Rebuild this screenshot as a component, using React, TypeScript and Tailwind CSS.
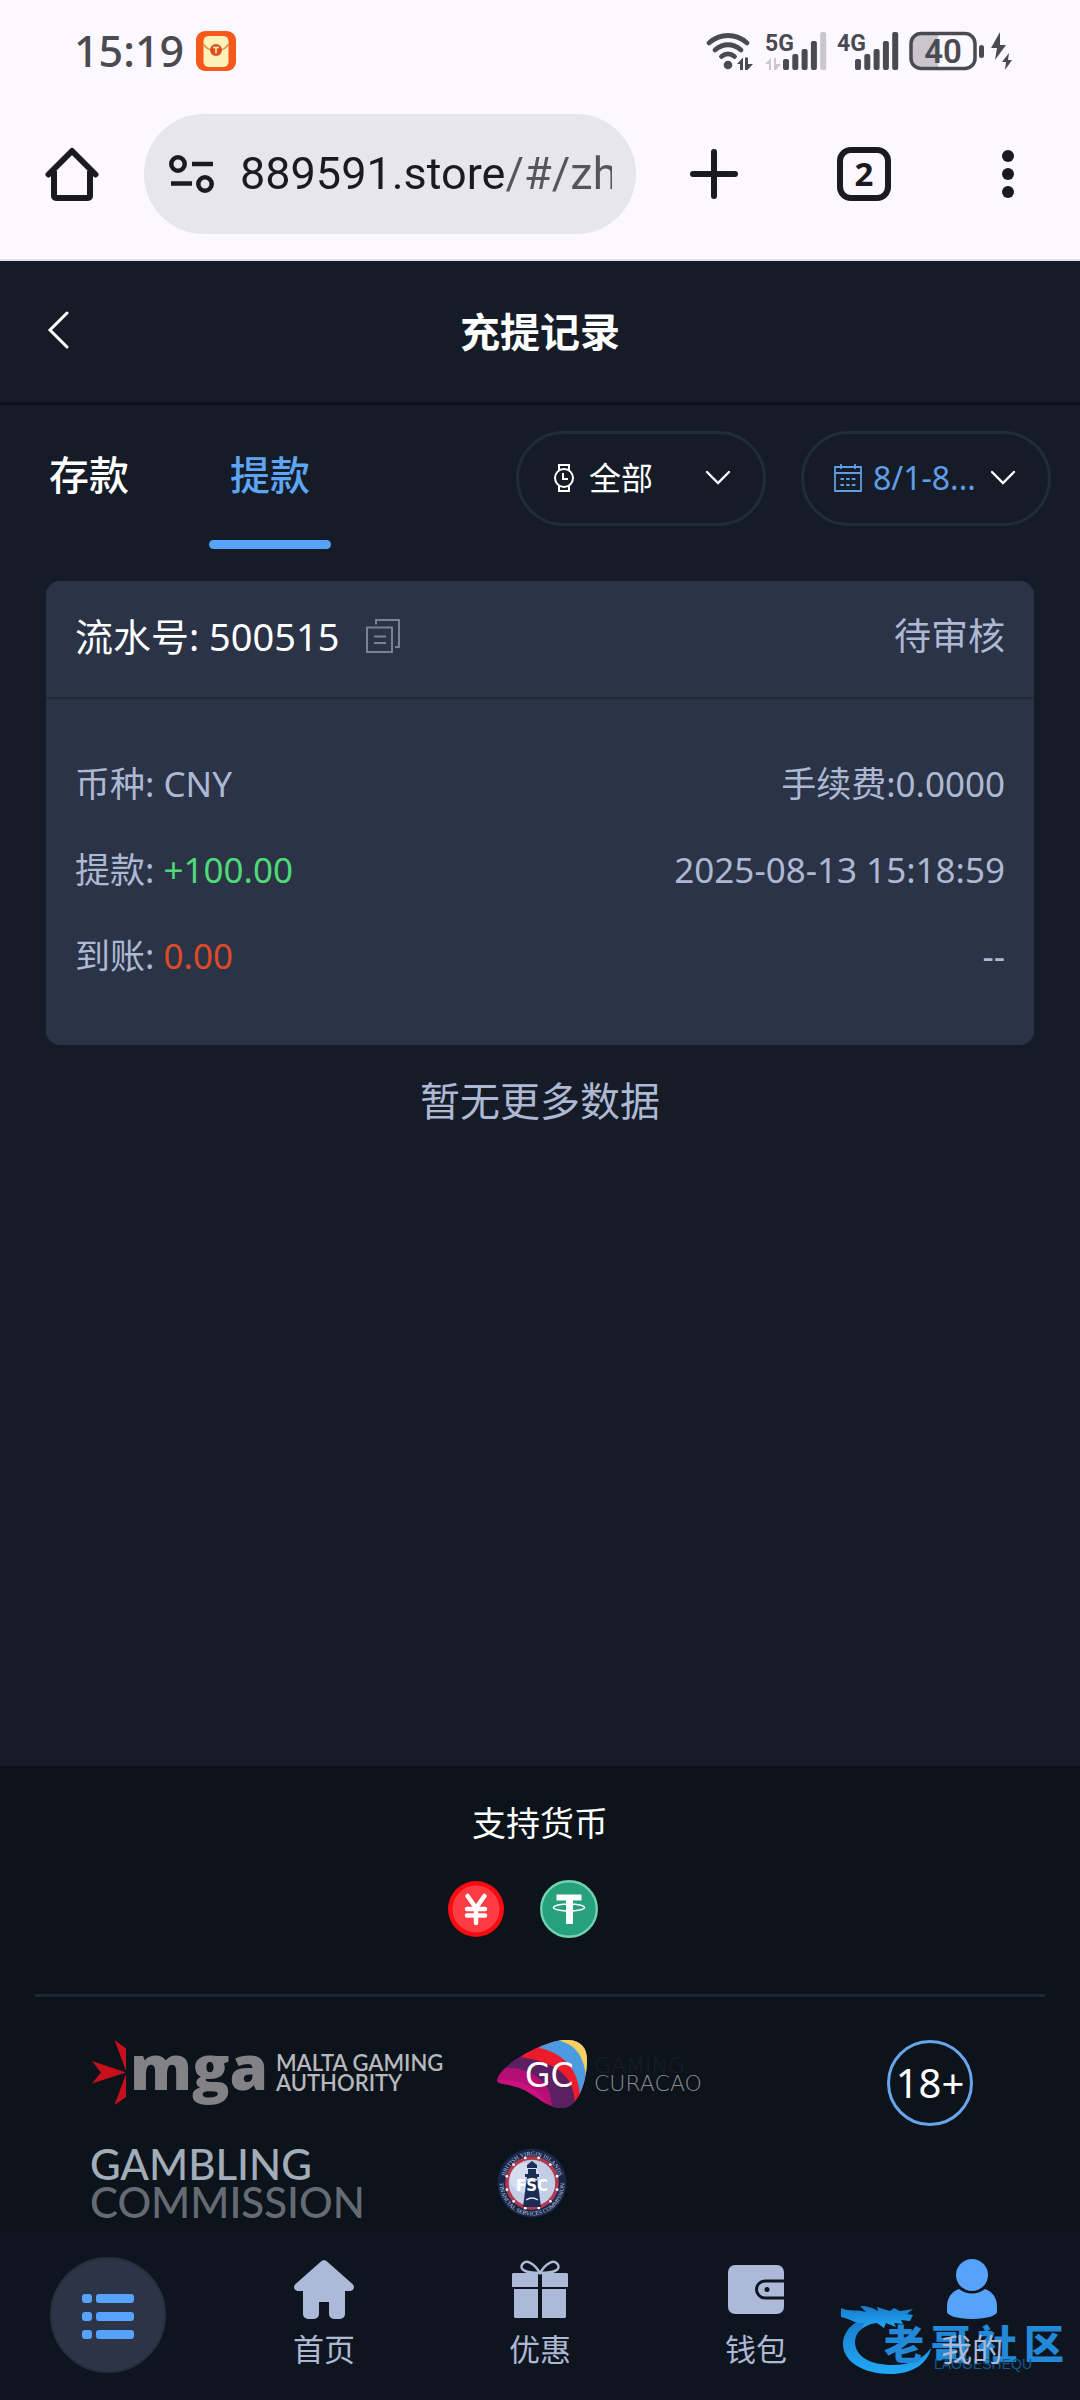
import { useState } from "react";
import type { ReactNode } from "react";

const INK = "#4b4a50";

function RedPacketIcon() {
  return (
    <svg width="42" height="42" viewBox="0 0 42 42" aria-hidden="true">
      <rect x="1" y="1" width="40" height="40" rx="9" fill="#f4581a" />
      <rect x="8.500" y="6" width="25" height="31" rx="5" fill="#fdf0b8" />
      <path d="M8.500 14c2 4.500 6.500 6.500 12.500 6.500S31.500 18.500 33.500 14" fill="none" stroke="#d98a4c" strokeWidth="1.600" />
      <circle cx="21" cy="20" r="6" fill="#dd4d1c" />
      <path d="M18 17.500h6M21 17.500v6" stroke="#fdf0b8" strokeWidth="1.500" fill="none" />
    </svg>
  );
}

function WifiIcon() {
  return (
    <svg width="50" height="40" viewBox="0 0 50 40" aria-hidden="true">
      <g fill="none" stroke={INK} strokeWidth="4.800" strokeLinecap="round">
        <path d="M4 12C15 2 31 2 42 12" />
        <path d="M10 19c8-7 18-7 26 0" />
        <path d="M16.500 25.500c4-3.500 9-3.500 13 0" />
      </g>
      <circle cx="23" cy="34" r="4.300" fill={INK} />
      <path d="M32 33l6-6.500V39h-3v-6zM40 26.500h3V33h5l-5.500 6H40z" fill={INK} />
    </svg>
  );
}

function Signal({ label, weak }: { label: string; weak?: boolean }) {
  const tops = [27, 22, 17, 9, 0];
  return (
    <svg className="overflow-visible" width="62" height="38" viewBox="0 0 62 38" aria-label={label}>
      <text x="0" y="19" fontFamily="Roboto, sans-serif" fontSize="23" fontWeight="700" fill={INK}>
        {label}
      </text>
      {weak && <path d="M0 32l6-6v12H4v-6zM9 26h2v6h5l-5 6H9z" fill="#c9c6cd" />}
      {tops.map((top, i) => (
        <rect
          key={top}
          x={18 + i * 9.300}
          y={top}
          width="6"
          height={38 - top}
          rx="2"
          fill={weak && i === 4 ? "#c9c6cd" : INK}
        />
      ))}
    </svg>
  );
}

function BatteryIcon() {
  return (
    <svg className="overflow-visible" width="104" height="40" viewBox="0 0 104 40" aria-label="40%">
      <path d="M11 3h18v34H11a8 8 0 0 1-8-8V11a8 8 0 0 1 8-8z" fill="#c9c6cd" />
      <rect x="2" y="2.500" width="64" height="35" rx="10" fill="none" stroke={INK} strokeWidth="3.500" />
      <rect x="70" y="14" width="5" height="13" rx="2.500" fill={INK} />
      <text x="34" y="32" textAnchor="middle" fontFamily="Roboto, sans-serif" fontSize="33" fontWeight="600" fill={INK}>
        40
      </text>
      <path d="M91 1L82 17h6l-2 12 11-15h-6zM100 22l-7 9h4l-1 8 7-10h-4z" fill={INK} />
    </svg>
  );
}

function HomeOutline() {
  return (
    <svg width="54" height="56" viewBox="0 0 54 56" fill="none" stroke="#1b1b1f" strokeWidth="6" aria-hidden="true">
      <path d="M3.500 28.500L27 5l23.500 23.500" strokeLinecap="round" strokeLinejoin="round" />
      <path d="M9 25v25a2 2 0 0 0 2 2h32a2 2 0 0 0 2-2V25" strokeLinejoin="round" />
    </svg>
  );
}

function SiteSettingsIcon() {
  return (
    <svg width="46" height="40" viewBox="0 0 46 40" fill="none" stroke="#1b1b1f" strokeWidth="4.500" aria-hidden="true">
      <circle cx="9" cy="10" r="6.700" />
      <path d="M23 10h21M2 29.500h21" />
      <circle cx="36" cy="30" r="6.700" />
    </svg>
  );
}

function Chevron() {
  return (
    <svg className="pointer-events-none shrink-0" width="26" height="16" viewBox="0 0 26 16" aria-hidden="true">
      <path d="M2 2l11 11L24 2" fill="none" stroke="#fff" strokeWidth="2.400" strokeLinecap="round" />
    </svg>
  );
}

function WatchIcon() {
  return (
    <svg className="shrink-0" width="22" height="30" viewBox="0 0 22 30" fill="none" stroke="#fff" strokeWidth="2" aria-hidden="true">
      <circle cx="11" cy="15" r="9" />
      <path d="M6 7V2h10v5M6 23v5h10v-5M10 10v6h5" />
    </svg>
  );
}

function CalendarIcon() {
  return (
    <svg className="shrink-0" width="30" height="30" viewBox="0 0 30 30" fill="none" stroke="#5f9ee6" strokeWidth="1.800" aria-hidden="true">
      <path d="M2 4h26v24H2zM2 10h26M8 1v5M22 1v5" />
      <path d="M7.500 16h15M7.500 22h15" strokeDasharray="3.500 2.200" />
    </svg>
  );
}

function CopyIcon() {
  return (
    <svg width="36" height="36" viewBox="0 0 36 36" fill="none" stroke="#78839a" strokeWidth="2" aria-hidden="true">
      <path d="M2 9.500h25V34H2zM9 18.500h12M9 25h12" />
      <path d="M11 6.500V2h23v27h-4" />
    </svg>
  );
}

function YuanCoin() {
  return (
    <svg width="58" height="58" viewBox="0 0 58 58" aria-label="CNY">
      <circle cx="29" cy="29" r="28" fill="#f80c12" />
      <circle cx="29" cy="29" r="23.500" fill="#fd3d43" />
      <path d="M20.500 16L29 28l8.500-12M20 29h18M20 35.500h18M29 28v15" fill="none" stroke="#fff" strokeWidth="4.500" strokeLinecap="round" strokeLinejoin="round" />
    </svg>
  );
}

function TetherCoin() {
  return (
    <svg width="58" height="58" viewBox="0 0 58 58" aria-label="USDT">
      <circle cx="29" cy="29" r="27.800" fill="#26a17b" stroke="#6fd3b0" strokeWidth="2.400" />
      <path d="M16.500 14.500h25v6H33V44h-7V20.500h-9.500z" fill="#fff" />
      <ellipse cx="29" cy="27.500" rx="15.500" ry="3.600" fill="none" stroke="#fff" strokeWidth="1.500" />
    </svg>
  );
}

function MgaLogo() {
  return (
    <svg className="overflow-visible" width="352" height="70" viewBox="0 0 352 70" aria-label="Malta Gaming Authority">
      <g fill="#c8101c">
        <path d="M0 21L34 32.500 0 43.500l9-11z" />
        <path d="M22.500 0L34 8.500V31zM22.500 65L34 57V34z" />
      </g>
      <text x="38" y="50" fontFamily="Open Sans, sans-serif" fontSize="62" fontWeight="800" fill="#828286">mga</text>
      <g fontFamily="Lato, sans-serif" fontSize="22" fontWeight="600" fill="#b7b8bb">
        <text x="184" y="31">MALTA GAMING</text>
        <text x="184" y="51">AUTHORITY</text>
      </g>
    </svg>
  );
}

function CuracaoLogo() {
  return (
    <svg width="224" height="70" viewBox="0 0 224 70" aria-label="Gaming Curacao">
      <defs>
        <clipPath id="gc-shape">
          <path d="M0 40C2 26 44 2 66 0c16-1 24 6 24 20 0 20-8 48-25 48C44 68 38 48 6 44 2 43 0 42 0 40z" />
        </clipPath>
      </defs>
      <g clipPath="url(#gc-shape)">
        <rect width="92" height="70" fill="#b50f74" />
        <path d="M0 30C14 22 60 34 54 70H92V0H20z" fill="#5c2060" />
        <path d="M24 17C52 22 78 30 78 66L92 60V0H40z" fill="#ee1b2a" />
        <path d="M42 8C64 12 84 28 83 62L92 50V0H50z" fill="#4a9be0" />
        <path d="M60 0C76 4 86 12 89 36L92 30V0z" fill="#f7d05e" />
        <path d="M0 40C20 38 44 46 52 70H0z" fill="#c9117f" />
      </g>
      <text x="28" y="47" fontFamily="DejaVu Sans, sans-serif" fontSize="33" fill="#fff">GC</text>
      <g fontFamily="DejaVu Sans, sans-serif" fontWeight="200" fontSize="22">
        <text x="97" y="33" fill="#181f27">GAMING</text>
        <text x="97" y="51" fill="#8a8d90">CURACAO</text>
      </g>
    </svg>
  );
}

function GamblingCommissionLogo() {
  return (
    <svg className="overflow-visible" width="280" height="70" viewBox="0 0 280 70" aria-label="Gambling Commission">
      <g fontFamily="Lato, sans-serif" fontSize="42" fontWeight="500">
        <text x="-2" y="32" fill="#a3adb8">GAMBLING</text>
        <text x="-2" y="70" fill="#666b73">COMMISSION</text>
      </g>
    </svg>
  );
}

function FscLogo() {
  const studs = Array.from({ length: 12 }, (_, i) => (i * Math.PI) / 6 + 0.260);
  return (
    <svg width="70" height="70" viewBox="0 0 70 70" aria-label="British Virgin Islands Financial Services Commission">
      <defs>
        <path id="fsc-top" d="M7.500 35a27.500 27.500 0 0 1 55 0" />
        <path id="fsc-bottom" d="M2.500 35a32.500 32.500 0 0 0 65 0" />
      </defs>
      <circle cx="35" cy="35" r="34.500" fill="#182748" />
      <circle cx="35" cy="35" r="25" fill="#c3cde6" stroke="#b23a50" strokeWidth="3.500" />
      <circle cx="28" cy="30" r="15" fill="#dfe6f5" opacity=".6" />
      {studs.map((a) => (
        <circle key={a} cx={35 + 26 * Math.cos(a)} cy={35 + 26 * Math.sin(a)} r="1.400" fill="#fff" />
      ))}
      <path d="M30 17l5-4 5 4v3H30zM31 21h8v5h-8zM28 26h14v3H28zM30 29h10l4 30H26z" fill="#1b2c55" />
      <path d="M29 52q6-4 12 0M30 32q5-3 10 0" fill="none" stroke="#dfe6f5" strokeWidth="1.500" />
      <text x="35" y="43" textAnchor="middle" fontFamily="DejaVu Sans, sans-serif" fontWeight="700" fontSize="15" fill="#fff">FSC</text>
      <g fontFamily="Liberation Serif, serif" fontSize="6" fill="#c2cbe0">
        <text textAnchor="middle">
          <textPath href="#fsc-top" startOffset="50%">BRITISH VIRGIN ISLANDS</textPath>
        </text>
        <text textAnchor="middle">
          <textPath href="#fsc-bottom" startOffset="50%">FINANCIAL SERVICES COMMISSION</textPath>
        </text>
      </g>
    </svg>
  );
}

function HomeSolid() {
  return (
    <svg width="60" height="60" viewBox="0 0 60 60" fill="#adb9d9" aria-hidden="true">
      <path d="M27 2.500a4 4 0 0 1 6 0L58.500 25c3 3 1 7-3 7H51v23a5 5 0 0 1-5 5h-6a5 5 0 0 1-5-5V43H25v12a5 5 0 0 1-5 5h-6a5 5 0 0 1-5-5V32H4.500c-4 0-6-4-3-7z" />
    </svg>
  );
}

function GiftIcon() {
  return (
    <svg width="60" height="60" viewBox="0 0 60 60" fill="#adb9d9" aria-hidden="true">
      <path d="M30 14C24 4 16 0 12.500 5S14 14 30 14c16 0 21-4 17.500-9S36 4 30 14z" fill="none" stroke="#adb9d9" strokeWidth="2.400" />
      <path d="M3 14h25v14H2V15zM32 14h25l1 1v13H32zM4 30h24v29H5l-1-1zM32 30h24v28l-1 1H32z" />
    </svg>
  );
}

function WalletIcon() {
  return (
    <svg width="60" height="60" viewBox="0 0 60 60" aria-hidden="true">
      <rect x="2" y="6" width="56" height="49" rx="7" fill="#adb9d9" />
      <path d="M59 22H39a8.500 8.500 0 0 0 0 17h20" fill="none" stroke="#0f151f" strokeWidth="3" />
      <circle cx="41" cy="30.500" r="2.500" fill="#0f151f" />
    </svg>
  );
}

function PersonIcon() {
  return (
    <svg width="60" height="60" viewBox="0 0 60 60" fill="#57a2fa" aria-hidden="true">
      <circle cx="30" cy="16" r="16" />
      <path d="M17 30c8 6 18 6 26 0 8 3 12 9 12 18v5c0 3-9 7-25 7S5 56 5 53v-5c0-9 4-15 12-18z" />
    </svg>
  );
}

function ListIcon() {
  return (
    <svg className="mt-1" width="52" height="46" viewBox="0 0 52 46" fill="#57a2fa" aria-hidden="true">
      {[0, 18, 36].map((y) => (
        <g key={y}>
          <rect x="0" y={y} width="10" height="9" rx="3" />
          <rect x="14" y={y} width="38" height="9" rx="3" />
        </g>
      ))}
    </svg>
  );
}

function CommunityMark() {
  return (
    <div className="pointer-events-none absolute right-[14px] bottom-[22px] h-[80px] w-[226px]" aria-hidden="true">
      <svg className="absolute inset-0" width="226" height="80" viewBox="0 0 226 80">
        <defs>
          <linearGradient id="dragon" x1="0" y1="0" x2="0" y2="1">
            <stop offset="0" stopColor="#1678c8" />
            <stop offset="1" stopColor="#22a9f7" />
          </linearGradient>
        </defs>
        <g fill="url(#dragon)">
          <path d="M36 17C16 20 3 32 3 46c0 18 21 30 47 30 22 0 38-10 41-26-9 12-21 17-39 17-22 0-37-9-37-23 0-10 9-17 23-20z" />
          <path d="M1 10c9 4 16 1 25 4l-6-6c8 0 13 2 18 5l-1-4 13 4 4-3 6 3 13-2-6 5 6 1-3 6-9-1 2 4-9-1 2 4-10-4-2 5-7-5-7 1-8 4 3-6c-8 3-14-3-24-5z" />
        </g>
      </svg>
      <div className="absolute top-[24px] left-[44px] flex w-[180px] justify-between font-['Noto_Sans_CJK_SC',sans-serif] text-[40px] leading-[40px] font-black text-[#2289d8]">
        <span>老</span>
        <span>哥</span>
        <span>社</span>
        <span>区</span>
      </div>
      <span className="absolute top-[58px] left-[94px] font-['Liberation_Sans',sans-serif] text-[14px] leading-[16px] text-[#15588f]">
        LAOGESHEQU
      </span>
    </div>
  );
}

function RecordRow({ label, value, valueClass, right }: { label: string; value: string; valueClass?: string; right: string }) {
  return (
    <div className="flex h-[86px] items-center justify-between">
      <span>
        {label}: <span className={valueClass}>{value}</span>
      </span>
      <span>{right}</span>
    </div>
  );
}

function NavItem({ label, children }: { label: string; children: ReactNode }) {
  return (
    <a href="#" className="flex flex-col items-center gap-[10px] pt-[2px] text-[31px] leading-[40px]">
      {children}
      <span className="relative z-10">{label}</span>
    </a>
  );
}

function BrowserChrome() {
  return (
    <header className="border-b-2 border-[#e2e1e9] bg-[#fbf8ff]">
      <div className="flex h-[102px] items-center justify-between pr-[67px] pl-[74px]">
        <div className="flex items-center gap-[11px]">
          <span className="text-[43px] leading-[60px] font-medium text-[#4b4a50]">15:19</span>
          <RedPacketIcon />
        </div>
        <div className="flex items-center gap-[10px]">
          <WifiIcon />
          <Signal label="5G" weak />
          <Signal label="4G" />
          <BatteryIcon />
        </div>
      </div>
      <div className="flex h-[157px] items-start pt-3 text-[#1b1b1f]">
        <button className="flex h-[120px] w-[144px] items-center justify-center" aria-label="主页">
          <HomeOutline />
        </button>
        <div className="flex h-[120px] min-w-0 flex-1 items-center gap-[25px] rounded-full bg-[#e7e6ec] pr-6 pl-[25px]">
          <SiteSettingsIcon />
          <input
            aria-label="网址"
            readOnly
            value="889591.store/#/zh"
            className="h-[64px] min-w-0 flex-1 bg-linear-[90deg,#1b1b1f_264px,#55555c_264px] bg-clip-text font-['Roboto',sans-serif] text-[45px] text-transparent outline-none"
          />
        </div>
        <button className="flex h-[120px] w-[156px] items-center justify-center" aria-label="新标签页">
          <svg width="48" height="50" viewBox="0 0 48 50" aria-hidden="true">
            <path d="M3 25h42M24 3v44" stroke="#1b1b1f" strokeWidth="6" strokeLinecap="round" />
          </svg>
        </button>
        <button className="flex h-[120px] w-[144px] items-center justify-center" aria-label="标签页">
          <span className="flex h-[54px] w-[54px] items-center justify-center rounded-[14px] border-6 border-[#1b1b1f] text-[33px] leading-[40px] font-bold">
            2
          </span>
        </button>
        <button className="flex h-[120px] w-[144px] items-center justify-center" aria-label="菜单">
          <svg width="12" height="50" viewBox="0 0 12 50" fill="#1b1b1f" aria-hidden="true">
            <circle cx="6" cy="7" r="6" />
            <circle cx="6" cy="25" r="6" />
            <circle cx="6" cy="43" r="6" />
          </svg>
        </button>
      </div>
    </header>
  );
}

const tabs = ["存款", "提款"];

export default function App() {
  const [active, setActive] = useState("提款");

  return (
    <div className="flex min-h-screen flex-col bg-[#151c27] font-['Noto_Sans','Noto_Sans_CJK_SC',sans-serif] text-[#adb8d4]">
      <BrowserChrome />

      <div className="grid h-[144px] grid-cols-[1fr_auto_1fr] items-center border-b-3 border-[#0c121c] px-[45px]">
        <button className="justify-self-start" aria-label="返回">
          <svg width="26" height="42" viewBox="0 0 26 42" aria-hidden="true">
            <path d="M22 2L5 19l17 17" fill="none" stroke="#fff" strokeWidth="3" strokeLinecap="round" />
          </svg>
        </button>
        <h1 className="text-[40px] leading-[60px] font-bold text-white">充提记录</h1>
      </div>

      <div className="flex items-center justify-between pr-[29px] pl-[28px]">
        <div className="flex gap-[59px]">
          {tabs.map((tab) => (
            <button
              key={tab}
              onClick={() => setActive(tab)}
              className={
                tab === active
                  ? "flex w-[122px] flex-col items-center text-[40px] leading-[60px] font-medium text-[#5ea5f5]"
                  : "flex w-[122px] flex-col items-center text-[40px] leading-[60px] font-medium text-white"
              }
            >
              <span className="flex h-[135px] items-center pt-1">{tab}</span>
              <span className={tab === active ? "h-[9px] w-full rounded-full bg-[#57a2fa]" : "h-[9px] w-full"} />
            </button>
          ))}
        </div>
        <div className="flex gap-[35px] pt-[2px]">
          <label className="flex h-[95px] w-[250px] items-center gap-[14px] rounded-full border-3 border-[#242b38] pr-[32px] pl-[34px]">
            <WatchIcon />
            <select aria-label="状态" className="min-w-0 flex-1 appearance-none bg-transparent text-[32px] leading-[44px] text-white outline-none">
              <option>全部</option>
            </select>
            <Chevron />
          </label>
          <button className="flex h-[95px] w-[250px] items-center rounded-full border-3 border-[#242b38] pr-[32px] pl-[29px] text-[#5f9ee6]">
            <CalendarIcon />
            <span className="flex-1 pl-[10px] text-left text-[32px] leading-[44px] whitespace-nowrap">8/1-8...</span>
            <Chevron />
          </button>
        </div>
      </div>

      <main className="flex-1 px-[46px] pt-8">
        <article className="rounded-[14px] bg-[#2b3346]">
          <div className="flex h-[118px] items-center justify-between border-b-2 border-[#232a3a] px-[29px] pb-[6px] text-[37px] leading-[52px]">
            <div className="flex items-center gap-[26px]">
              <span className="text-[38px] text-white">流水号: 500515</span>
              <button aria-label="复制">
                <CopyIcon />
              </button>
            </div>
            <span>待审核</span>
          </div>
          <div className="px-[29px] pt-[42px] pb-[46px] text-[35px] leading-[52px]">
            <RecordRow label="币种" value="CNY" right="手续费:0.0000" />
            <RecordRow label="提款" value="+100.00" valueClass="text-[#4fd977]" right="2025-08-13 15:18:59" />
            <RecordRow label="到账" value="0.00" valueClass="text-[#dc4a29]" right="--" />
          </div>
        </article>
        <p className="mt-[26px] text-center text-[40px] leading-[60px]">暂无更多数据</p>
      </main>

      <footer className="bg-[#0c131b] pt-[33px] pb-[15px]">
        <h2 className="text-center text-[34px] leading-[48px] text-white">支持货币</h2>
        <div className="mt-[33px] flex justify-center">
          <span className="mr-[35px]">
            <YuanCoin />
          </span>
          <span className="mr-[35px]">
            <TetherCoin />
          </span>
        </div>
        <hr className="mx-[35px] mt-[56px] border-t-3 border-[#1e2631]" />
        <div className="mt-[43px] grid grid-cols-[405px_1fr_auto] gap-y-[38px] pr-[107px] pl-[92px]">
          <MgaLogo />
          <CuracaoLogo />
          <span className="row-span-2 flex h-[86px] w-[86px] items-center justify-center rounded-full border-3 border-[#68a5ec] text-[40px] leading-[50px] text-white">
            18+
          </span>
          <GamblingCommissionLogo />
          <FscLogo />
        </div>
      </footer>

      <nav className="relative grid grid-cols-5 bg-[#0f151f] pt-6 pb-[27px]">
        <button
          className="flex h-[116px] w-[116px] items-center justify-center justify-self-center rounded-full border-2 border-[#272e3e] bg-[#2d3447]"
          aria-label="菜单列表"
        >
          <ListIcon />
        </button>
        <NavItem label="首页">
          <HomeSolid />
        </NavItem>
        <NavItem label="优惠">
          <GiftIcon />
        </NavItem>
        <NavItem label="钱包">
          <WalletIcon />
        </NavItem>
        <NavItem label="我的">
          <PersonIcon />
        </NavItem>
        <CommunityMark />
      </nav>
    </div>
  );
}
